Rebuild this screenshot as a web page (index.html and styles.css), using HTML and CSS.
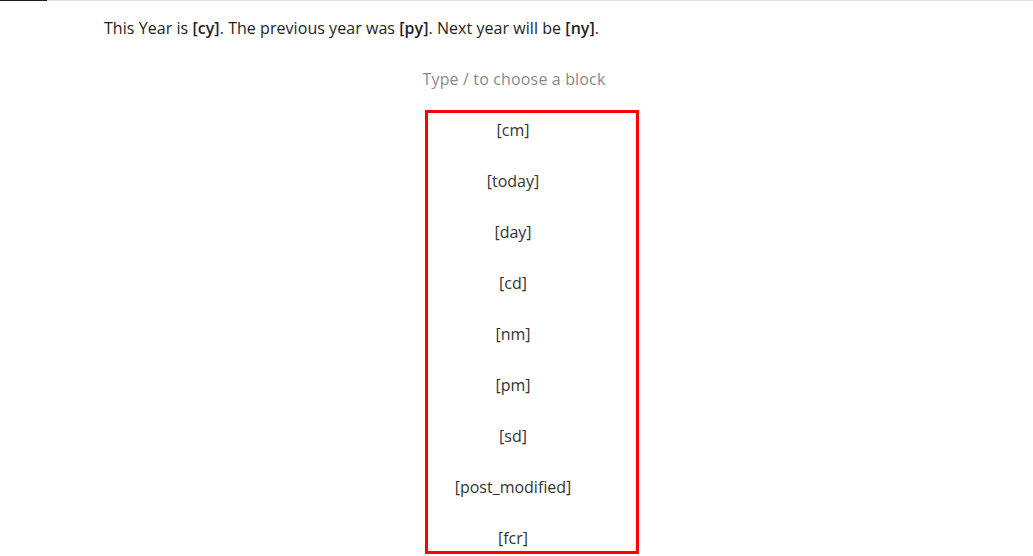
FILE: index.html
```html
<!DOCTYPE html>
<html>
<head>
<meta charset="utf-8">
<link rel="stylesheet" href="styles.css">
</head>
<body>
<div class="topbar"><div class="topbar-active"></div></div>
<main class="editor">
  <p class="para">This Year is <strong>[cy]</strong>. The previous year was <strong>[py]</strong>. Next year will be <strong>[ny]</strong>.</p>
  <p class="placeholder">Type / to choose a block</p>
  <div class="box-row">
    <div class="box">
      <p class="item">[cm]</p>
      <p class="item">[today]</p>
      <p class="item">[day]</p>
      <p class="item">[cd]</p>
      <p class="item">[nm]</p>
      <p class="item">[pm]</p>
      <p class="item">[sd]</p>
      <p class="item">[post_modified]</p>
      <p class="item">[fcr]</p>
    </div>
  </div>
</main>
</body>
</html>
```

FILE: styles.css
```css
html, body {
  margin: 0;
  padding: 0;
  background: #fff;
  overflow: hidden;
}
body {
  font-family: "Open Sans", "Noto Sans", sans-serif;
  color: #1e1e1e;
  height: 556px;
}
.topbar {
  height: 1px;
  background: #e0e0e0;
  display: flex;
}
.topbar-active {
  width: 47px;
  background: #1e1e1e;
}
.editor {
  width: 820px;
  padding-left: 104px;
  display: flex;
  flex-direction: column;
}
.para {
  margin: 15px 0 0;
  font-size: 16px;
  line-height: 24px;
  letter-spacing: 0.05px;
}
.para strong {
  font-weight: 600;
}
.placeholder {
  margin: 27px 0 0;
  font-size: 16px;
  line-height: 24px;
  color: #8a8a8a;
  text-align: center;
  letter-spacing: 0.15px;
}
.box-row {
  display: flex;
  padding-left: 321px;
  margin-top: 19px;
}
.box {
  width: 208px;
  height: 433px;
  border: 3px solid #ff0000;
  display: flex;
  flex-direction: column;
  gap: 27px;
  padding-top: 5px;
  box-sizing: content-box;
}
.item {
  margin: 0;
  font-size: 16px;
  line-height: 24px;
  color: #333;
  text-align: center;
  padding-right: 38px;
  flex-shrink: 0;
}
```
